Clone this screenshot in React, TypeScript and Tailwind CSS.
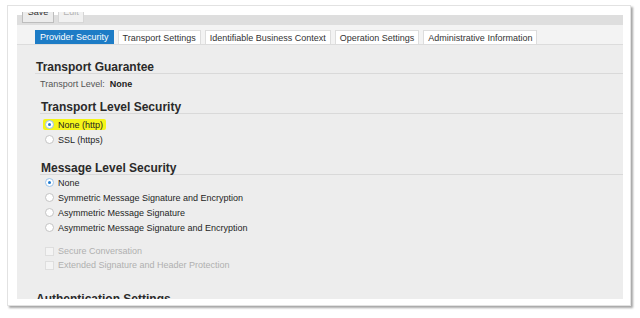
import React from "react";

const font = { fontFamily: '"Liberation Sans", Arial, sans-serif' };

function Radio({ checked }: { checked?: boolean }) {
  return (
    <span
      className={`inline-flex items-center justify-center w-[9px] h-[9px] rounded-full bg-white border ${
        checked ? "border-[#9cc3e8]" : "border-[#c4c4c4]"
      }`}
    >
      {checked && <span className="w-[3px] h-[3px] rounded-full bg-[#1f7bd0]" />}
    </span>
  );
}

function RadioRow({ label, checked, highlight }: { label: string; checked?: boolean; highlight?: boolean }) {
  return (
    <div className="h-[15px] flex items-center">
      <div
        className={`flex items-center gap-[4px] h-[11px] ${
          highlight ? "bg-[#f5f51a] rounded-[2px] ml-[3px] pl-[2px] pr-[3px]" : "ml-[5px]"
        }`}
      >
        <Radio checked={checked} />
        <span className="text-[9px] leading-[10px] text-[#1e1e1e]">{label}</span>
      </div>
    </div>
  );
}

function CheckRow({ label }: { label: string }) {
  return (
    <div className="h-[14px] flex items-center pl-[5px] gap-[4px]">
      <span className="w-[9px] h-[9px] bg-[#f4f4f4] border border-[#dedede]" />
      <span className="text-[9px] leading-[10px] text-[#b0b0b0]">{label}</span>
    </div>
  );
}

function Header({ children, className = "" }: { children: React.ReactNode; className?: string }) {
  return (
    <div className={`border-b border-[#d9d9d9] ${className}`}>
      <div className="text-[12px] leading-[12px] font-bold text-[#2a2a2a] pl-[1px]">{children}</div>
    </div>
  );
}

const tabs = [
  "Provider Security",
  "Transport Settings",
  "Identifiable Business Context",
  "Operation Settings",
  "Administrative Information",
];

export default function App() {
  return (
    <div className="w-[640px] h-[318px] bg-white overflow-hidden pt-[5px] pl-[7px]" style={font}>
      <div className="w-[624px] h-[301px] bg-white border border-[#e2e2e2] shadow-[2px_2px_2px_rgba(0,0,0,0.35)] pl-[9px] pr-[7px] pt-[6px] pb-[6px]">
        <div className="h-full flex flex-col overflow-hidden">
          {/* toolbar */}
          <div className="h-[13px] shrink-0 bg-[linear-gradient(to_bottom,#ffffff_3px,#dedede_3px)] flex items-start pl-[5px] gap-[4px]">
            <div className="w-[32px] h-[11px] bg-[#ececec] border border-[#bdbdbd] border-t-0 overflow-hidden flex justify-center">
              <span className="text-[9px] leading-[10px] text-[#333] -mt-[5px]">Save</span>
            </div>
            <div className="w-[26px] h-[11px] bg-[#f1f1f1] border border-[#d6d6d6] border-t-0 overflow-hidden flex justify-center">
              <span className="text-[9px] leading-[10px] text-[#b5b5b5] -mt-[5px]">Edit</span>
            </div>
          </div>
          {/* tabs */}
          <div className="h-[20px] shrink-0 bg-[#f3f3f3] border-b border-[#dcdcdc] flex items-end pl-[18px] gap-[4px]">
            {tabs.map((t, i) => (
              <div
                key={t}
                className={`h-[14px] px-[4px] flex items-center text-[9px] leading-[10px] ${
                  i === 0
                    ? "bg-[#1d7cc6] text-white border border-[#1d7cc6]"
                    : "bg-white text-[#333] border border-[#dddddd] border-b-0"
                }`}
              >
                {t}
              </div>
            ))}
          </div>
          {/* content */}
          <div className="flex-1 bg-[#ededed] pl-[18px]">
            <Header className="mt-[16px]">Transport Guarantee</Header>
            <div className="mt-[5px] pl-[5px] text-[9px] leading-[10px] text-[#555]">
              Transport Level:&nbsp; <span className="text-[#222] font-semibold">None</span>
            </div>
            <div className="pl-[5px]">
              <Header className="mt-[12px]">Transport Level Security</Header>
              <div className="mt-[3px]">
                <RadioRow label="None (http)" checked highlight />
                <RadioRow label="SSL (https)" />
              </div>
              <Header className="mt-[15px]">Message Level Security</Header>
              <div>
                <RadioRow label="None" checked />
                <RadioRow label="Symmetric Message Signature and Encryption" />
                <RadioRow label="Asymmetric Message Signature" />
                <RadioRow label="Asymmetric Message Signature and Encryption" />
              </div>
              <div className="mt-[9px]">
                <CheckRow label="Secure Conversation" />
                <CheckRow label="Extended Signature and Header Protection" />
              </div>
            </div>
            <div className="mt-[21px] text-[12px] leading-[12px] font-bold text-[#2a2a2a] pl-[1px]">
              Authentication Settings
            </div>
          </div>
        </div>
      </div>
    </div>
  );
}
